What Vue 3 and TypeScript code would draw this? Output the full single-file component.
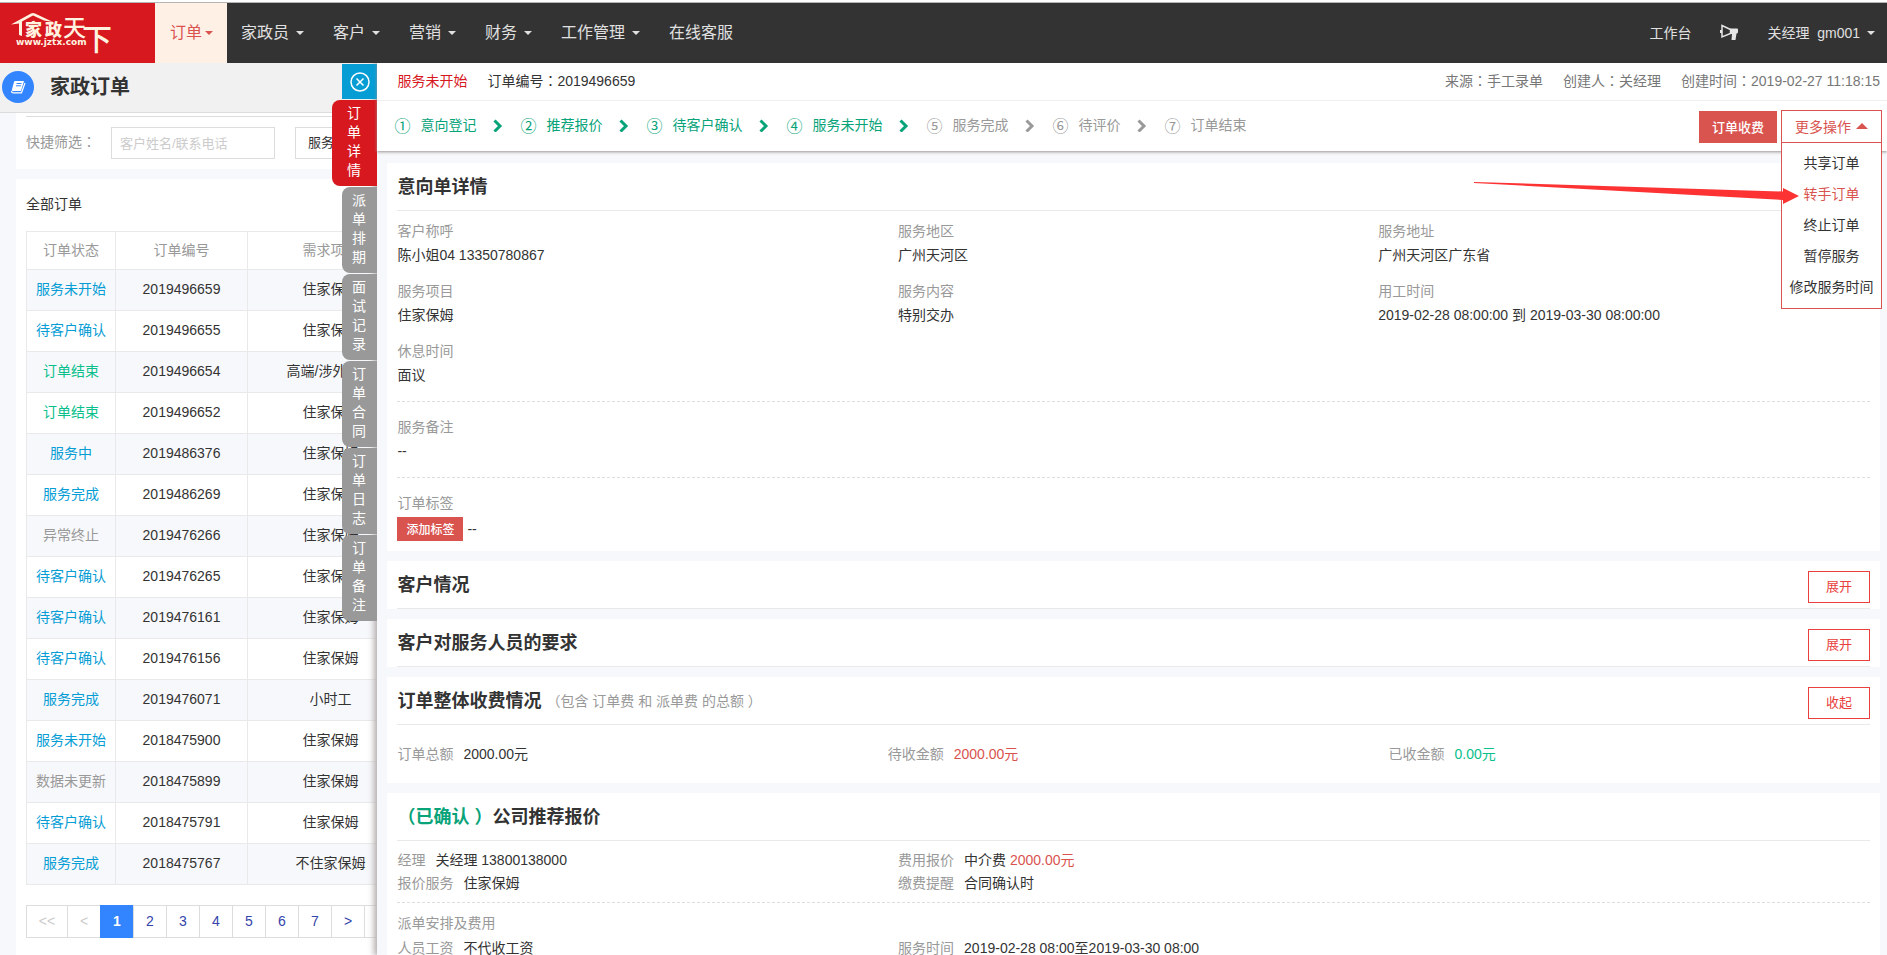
<script setup lang="ts">
import { ref } from 'vue'

interface NavItem { label: string; caret: boolean }
interface Order { status: string; tone: string; id: string; need: string }
interface Step { no: string; label: string; done: boolean }

const nav: NavItem[] = [
  { label: '家政员', caret: true },
  { label: '客户', caret: true },
  { label: '营销', caret: true },
  { label: '财务', caret: true },
  { label: '工作管理', caret: true },
  { label: '在线客服', caret: false },
]

const orders: Order[] = [
  { status: '服务未开始', tone: 'blue', id: '2019496659', need: '住家保姆' },
  { status: '待客户确认', tone: 'blue', id: '2019496655', need: '住家保姆' },
  { status: '订单结束', tone: 'green', id: '2019496654', need: '高端/涉外保姆' },
  { status: '订单结束', tone: 'green', id: '2019496652', need: '住家保姆' },
  { status: '服务中', tone: 'blue', id: '2019486376', need: '住家保姆' },
  { status: '服务完成', tone: 'blue', id: '2019486269', need: '住家保姆' },
  { status: '异常终止', tone: 'gray', id: '2019476266', need: '住家保姆' },
  { status: '待客户确认', tone: 'blue', id: '2019476265', need: '住家保姆' },
  { status: '待客户确认', tone: 'blue', id: '2019476161', need: '住家保姆' },
  { status: '待客户确认', tone: 'blue', id: '2019476156', need: '住家保姆' },
  { status: '服务完成', tone: 'blue', id: '2019476071', need: '小时工' },
  { status: '服务未开始', tone: 'blue', id: '2018475900', need: '住家保姆' },
  { status: '数据未更新', tone: 'gray', id: '2018475899', need: '住家保姆' },
  { status: '待客户确认', tone: 'blue', id: '2018475791', need: '住家保姆' },
  { status: '服务完成', tone: 'blue', id: '2018475767', need: '不住家保姆' },
]

const pages = ['1', '2', '3', '4', '5', '6', '7']
const tabs = ['订单详情', '派单排期', '面试记录', '订单合同', '订单日志', '订单备注']
const activeTab = ref(0)

const steps: Step[] = [
  { no: '①', label: '意向登记', done: true },
  { no: '②', label: '推荐报价', done: true },
  { no: '③', label: '待客户确认', done: true },
  { no: '④', label: '服务未开始', done: true },
  { no: '⑤', label: '服务完成', done: false },
  { no: '⑥', label: '待评价', done: false },
  { no: '⑦', label: '订单结束', done: false },
]

const details = [
  ['客户称呼', '陈小姐04 13350780867'],
  ['服务地区', '广州天河区'],
  ['服务地址', '广州天河区广东省'],
  ['服务项目', '住家保姆'],
  ['服务内容', '特别交办'],
  ['用工时间', '2019-02-28 08:00:00 到 2019-03-30 08:00:00'],
  ['休息时间', '面议'],
]

const actions = ['共享订单', '转手订单', '终止订单', '暂停服务', '修改服务时间']
const keyword = ref('')
</script>

<template>
  <div class="app">
    <header class="topbar">
      <a class="logo" href="#" aria-label="家政天下">
        <svg width="155" height="60" viewBox="0 0 155 60">
          <path d="M11 21.500 L31 10.500 Q33 9.500 35 10.500 L53 19 L44 17.500 L33 12.500 L22 18.500 L22 33 L19 32 L19 20.500 Z" fill="#fff3e0" />
          <text class="logo-name" x="25 45" y="33">家政</text>
          <text class="logo-big" x="63" y="33">天</text>
          <text class="logo-tall" x="82" y="47">下</text>
          <text class="logo-url" x="16" y="42">www.jztx.com</text>
        </svg>
      </a>
      <nav class="nav">
        <a class="nav-item current" href="#">订单<i class="caret"></i></a>
        <a v-for="n in nav" :key="n.label" class="nav-item" href="#">{{ n.label }}<i v-if="n.caret" class="caret"></i></a>
      </nav>
      <div class="user">
        <a href="#">工作台</a>
        <a href="#" aria-label="公告">
          <svg width="20" height="18" viewBox="0 0 20 18">
            <path d="M3 1.500 L11.500 5.500 V9.500 L3 13 Z" fill="none" stroke="#e6e6e6" stroke-width="1.500" />
            <path d="M1 6 H3 V9 H1 Z M11 4.500 H18 Q19 4.500 19 5.500 V8 Q19 9.500 17.500 9.500 L16.500 16 H12.500 L13 10 H11 Z" fill="#e6e6e6" />
          </svg>
        </a>
        <a class="account" href="#">关经理&nbsp; gm001<i class="caret"></i></a>
      </div>
    </header>

    <div class="body">
      <main class="list">
        <div class="list-head">
          <span class="book">
            <svg width="16" height="14" viewBox="0 0 16 14">
              <path d="M5 1 H14 L11 11 H2.500 Q1.500 11 1.800 10 L4 2 Q4.300 1 5 1 Z" fill="#fff" />
              <path d="M6.500 3.500 H11.500 M6 5.800 H11" stroke="#3385ff" />
              <path d="M1.500 11 Q1.500 12.800 3 12.800 H11.500 L15 3" fill="none" stroke="#fff" stroke-width="1.200" />
            </svg>
          </span>
          <h1>家政订单</h1>
        </div>
        <section class="card filter">
          <label for="keyword">快捷筛选<span class="mid">：</span></label>
          <input id="keyword" v-model="keyword" type="text" placeholder="客户姓名/联系电话" />
          <select aria-label="服务项目"><option>服务项目</option></select>
        </section>
        <section class="card orders">
          <h2>全部订单</h2>
          <table>
            <colgroup><col class="c1" /><col class="c2" /><col class="c3" /></colgroup>
            <thead>
              <tr><th>订单状态</th><th>订单编号</th><th>需求项目</th></tr>
            </thead>
            <tbody>
              <tr v-for="o in orders" :key="o.id">
                <td :class="o.tone">{{ o.status }}</td><td>{{ o.id }}</td><td>{{ o.need }}</td>
              </tr>
            </tbody>
          </table>
          <div class="pager">
            <button class="off wide" type="button">&lt;&lt;</button>
            <button class="off" type="button">&lt;</button>
            <button v-for="p in pages" :key="p" type="button" :class="{ on: p === '1' }">{{ p }}</button>
            <button type="button">&gt;</button>
            <button class="wide" type="button">&gt;&gt;</button>
          </div>
        </section>
      </main>

      <aside class="drawer">
        <div class="tabs">
          <button class="close" type="button" aria-label="关闭">
            <svg width="20" height="20" viewBox="0 0 20 20" fill="none" stroke="#fff" stroke-width="1.500">
              <circle cx="10" cy="10" r="9" /><path d="M6.500 6.500 L13.500 13.500 M13.500 6.500 L6.500 13.500" />
            </svg>
          </button>
          <button v-for="(t, i) in tabs" :key="t" class="tab" type="button" :class="{ active: i === activeTab }" @click="activeTab = i">{{ t }}</button>
        </div>

        <div class="drawer-head">
          <div class="meta">
            <span class="state">服务未开始</span>
            <span class="code">订单编号<span class="mid">：</span>2019496659</span>
            <span class="from">来源<span class="mid">：</span>手工录单</span>
            <span>创建人<span class="mid">：</span>关经理</span>
            <span>创建时间<span class="mid">：</span>2019-02-27 11:18:15</span>
          </div>
          <div class="flow">
            <ol class="steps">
              <li v-for="(s, i) in steps" :key="s.no" :class="{ done: s.done }">
                <span class="no">{{ s.no }}</span><span>{{ s.label }}</span>
                <svg v-if="i < steps.length - 1" width="10" height="14" viewBox="0 0 10 14">
                  <path d="M1.500 2.500 L7 8 L1.500 13.500" fill="none" stroke="currentColor" stroke-width="3" />
                </svg>
              </li>
            </ol>
            <button class="charge" type="button">订单收费</button>
            <div class="more">
              <button class="more-btn" type="button">更多操作<i class="up"></i></button>
              <ul class="menu">
                <li v-for="(a, i) in actions" :key="a"><a href="#" :class="{ hot: i === 1 }">{{ a }}</a></li>
              </ul>
            </div>
          </div>
          <svg class="pointer" width="327" height="24" viewBox="0 0 327 24">
            <path d="M1 1 L310 10.500 V7 L326 15 L310 23 V19 L1 2 Z" fill="#fd3333" />
          </svg>
        </div>

        <div class="content">
          <section class="panel">
            <div class="title"><h3>意向单详情</h3></div>
            <dl class="grid">
              <div v-for="d in details" :key="d[0]"><dt>{{ d[0] }}</dt><dd>{{ d[1] }}</dd></div>
            </dl>
            <dl class="block"><dt>服务备注</dt><dd>--</dd></dl>
            <dl class="block last">
              <dt>订单标签</dt>
              <dd class="tagline"><button class="tag" type="button">添加标签</button><span>--</span></dd>
            </dl>
          </section>

          <section class="panel">
            <div class="title"><h3>客户情况</h3><button class="toggle" type="button">展开</button></div>
          </section>
          <section class="panel">
            <div class="title"><h3>客户对服务人员的要求</h3><button class="toggle" type="button">展开</button></div>
          </section>
          <section class="panel">
            <div class="title">
              <h3>订单整体收费情况</h3><small>（包含 订单费 和 派单费 的总额 ）</small>
              <button class="toggle" type="button">收起</button>
            </div>
            <dl class="totals">
              <div><dt>订单总额</dt><dd>2000.00元</dd></div>
              <div><dt>待收金额</dt><dd class="red">2000.00元</dd></div>
              <div><dt>已收金额</dt><dd class="green">0.00元</dd></div>
            </dl>
          </section>
          <section class="panel">
            <div class="title"><h3><span class="ok">（已确认 ）</span>公司推荐报价</h3></div>
            <dl class="pairs quote">
              <div><dt>经理</dt><dd>关经理 13800138000</dd></div>
              <div><dt>费用报价</dt><dd>中介费 <span class="red">2000.00元</span></dd></div>
              <div><dt>报价服务</dt><dd>住家保姆</dd></div>
              <div><dt>缴费提醒</dt><dd>合同确认时</dd></div>
            </dl>
            <div class="dispatch">
              <h4>派单安排及费用</h4>
              <dl class="pairs">
                <div><dt>人员工资</dt><dd>不代收工资</dd></div>
                <div><dt>服务时间</dt><dd>2019-02-28 08:00至2019-03-30 08:00</dd></div>
              </dl>
            </div>
          </section>
        </div>
      </aside>
    </div>
  </div>
</template>

<style>
body { margin: 0; }
</style>

<style scoped>
.app {
  height: 100vh;
  display: flex;
  flex-direction: column;
  overflow: hidden;
  box-sizing: border-box;
  padding-top: 2px;
  background: #fff;
  color: #333;
  font: 14px/24px "Liberation Sans", "Noto Sans CJK SC", sans-serif;
}
.app *, .app *::before { box-sizing: border-box; }
h1, h2, h3, h4, dl, dd, ul, ol { margin: 0; padding: 0; }
ul, ol { list-style: none; }
a { color: inherit; text-decoration: none; }
button { font-family: inherit; cursor: pointer; padding: 0; border: 0; border-radius: 0; }
.mid { font-family: "Noto Sans CJK TC", sans-serif; line-height: 1; }
.blue { color: #069dd5; }
.green { color: #09c08c; }
.gray { color: #999; }
.red { color: #d9534f; }

.topbar {
  flex: none;
  display: flex;
  height: 61px;
  border-top: 1px solid #b5b5b5;
  background: #333;
  color: #e0e0e0;
}
.logo { width: 155px; background: #d7181e; }
.logo svg { display: block; }
.logo text { fill: #fff3e0; font-family: "Noto Sans CJK SC", sans-serif; }
.logo .logo-name { font-size: 17px; font-weight: 900; }
.logo .logo-big { font-size: 23px; font-weight: 500; }
.logo .logo-tall { font-size: 30px; font-weight: 500; }
.logo .logo-url { font: bold 9px "DejaVu Sans", sans-serif; }
.nav { display: flex; font-size: 16px; line-height: 60px; }
.nav-item { display: flex; align-items: center; padding: 0 15px 0 14px; }
.nav-item .caret { margin-left: 7px; }
.nav-item.current { background: #fff0e6; color: #d9534f; padding-left: 15px; padding-right: 14px; }
.nav-item.current .caret { margin-left: 3px; }
.caret { border: 4px solid transparent; border-top-color: currentColor; border-bottom: 0; }
.user { margin-left: auto; display: flex; align-items: center; gap: 28px; padding-right: 12px; }
.user svg { display: block; }
.account { display: flex; align-items: center; }
.account .caret { margin-left: 7px; }

.body { flex: 1; min-height: 0; position: relative; background: #f7f8fb; overflow: hidden; }
.list-head {
  height: 50px;
  display: flex;
  align-items: center;
  gap: 16px;
  padding: 0 0 2px 2px;
  background: #f1f1f1;
  border-bottom: 1px solid #ddd;
}
.list-head h1 { font-size: 20px; }
.book { width: 32px; height: 32px; border-radius: 50%; background: #3385ff; display: grid; place-items: center; }
.card { margin-left: 16px; padding: 0 10px; background: #fff; }
.filter { display: flex; align-items: center; height: 56px; padding-top: 4px; margin-bottom: 10px; position: relative; }
.filter::before { content: ""; position: absolute; top: 3px; left: 10px; right: 10px; height: 1px; background: #ddd; }
.filter label { width: 85px; padding-bottom: 2px; color: #999; }
.filter input, .filter select {
  height: 32px;
  border: 1px solid #ddd;
  border-radius: 0;
  background: #fff;
  color: #333;
  font: 13px/30px "Liberation Sans", "Noto Sans CJK SC", sans-serif;
  padding: 0 8px;
}
.filter input { width: 164px; margin-right: 20px; }
.filter input::placeholder { color: #ccc; }
.filter select { width: 120px; appearance: none; padding-left: 12px; }
.orders { padding-top: 13px; height: 900px; }
.orders h2 { font-size: 14px; font-weight: normal; margin-bottom: 15px; }
table { table-layout: fixed; width: 387px; border-collapse: collapse; text-align: center; }
.c1 { width: 89px; }
.c2 { width: 132px; }
.c3 { width: 166px; }
th, td { border: 1px solid #e9e9e9; padding: 0 0 2px; height: 41px; line-height: 20px; font-weight: normal; }
th { height: 38px; color: #999; }
tbody tr:nth-child(odd) { background: #f7f8fb; }
.pager { display: flex; margin-top: 20px; }
.pager button {
  width: 34px;
  height: 33px;
  margin-right: -1px;
  padding-bottom: 1px;
  background: #fff;
  border: 1px solid #ddd;
  color: #3344aa;
  font-size: 14px;
}
.pager .wide { width: 42px; }
.pager .off { color: #ccc; }
.pager .on { background: #3385ff; border-color: #3385ff; color: #fff; font-weight: bold; }

.drawer {
  position: absolute;
  top: 0;
  right: 0;
  bottom: 0;
  width: 80%;
  display: flex;
  flex-direction: column;
  background: #f7f8fb;
  box-shadow: -2px 0 6px 1px #b5aeae;
}
.tabs { position: absolute; right: 100%; top: 1px; display: flex; flex-direction: column; align-items: flex-end; gap: 1px; }
.close { width: 35px; height: 35px; background: #069dd5; display: grid; place-items: center; }
.tab {
  width: 35px;
  padding: 4px 11px 6px 9px;
  border-radius: 8px 0 0 8px;
  background: #999;
  color: #fff;
  font-size: 14px;
  line-height: 19px;
  word-break: break-all;
}
.tab.active { width: 45px; padding: 4px 16px 6px 14px; background: #d7181e; }
.drawer-head { position: relative; z-index: 2; background: #fff; box-shadow: 0 1px 3px #9a9090; }
.meta { display: flex; gap: 20px; height: 38px; align-items: center; padding: 0 7px 2px 20px; border-bottom: 1px solid #f0f0f0; color: #777; }
.state { color: #d7181e; }
.code { color: #333; }
.from { margin-left: auto; }
.flow { display: flex; height: 50px; padding: 9px 5px 0 17px; }
.steps { display: flex; height: 30px; align-items: center; color: #999; margin-right: auto; }
.steps li { display: flex; align-items: center; }
.steps .done { color: #09a37a; }
.steps .no { width: 26px; font-size: 16px; font-family: "Noto Sans CJK SC", sans-serif; }
.steps svg { margin: 0 17px; }
.charge { width: 78px; height: 32px; margin: 1px 4px 0 0; padding-bottom: 2px; background: #d9534f; color: #fff; font-size: 13px; font-weight: 500; }
.more { position: relative; width: 101px; }
.more-btn {
  display: flex;
  align-items: center;
  justify-content: center;
  gap: 5px;
  width: 100%;
  height: 33px;
  padding-bottom: 2px;
  border: 1px solid #d9534f;
  border-bottom: 0;
  background: #fff;
  color: #d9534f;
  font-size: 14px;
}
.up { border: 6px solid transparent; border-bottom-color: currentColor; border-top: 0; }
.menu { position: absolute; top: 32px; left: 0; right: 0; padding: 5px 0; border: 1px solid #d9534f; background: #fff; text-align: center; line-height: 31px; white-space: nowrap; }
.menu a { display: block; }
.hot { color: #d9534f; }
.pointer { position: absolute; right: 87px; top: 118px; }

.content { flex: 1; min-height: 0; overflow: hidden; padding: 12px 7px 0 10px; }
.panel { background: #fff; padding: 0 10px; margin-bottom: 10px; }
.title { display: flex; height: 48px; align-items: center; border-bottom: 1px solid #e9e9e9; }
.title h3 { font-size: 18px; line-height: 46px; }
.title small { font-size: 14px; color: #999; margin-left: 5px; }
.toggle { width: 62px; height: 32px; margin: 4px 0 0 auto; padding-bottom: 2px; border: 1px solid #e8403c; background: #fff; color: #e8403c; font-size: 13px; }
dt, h4 { color: #999; font-size: 14px; font-weight: normal; }
.grid { display: grid; grid-template-columns: 340fr 326fr 334fr; row-gap: 12px; padding: 8px 0 14px; }
.block { border-top: 1px dashed #ddd; padding: 13px 0 14px; }
.block.last { padding-bottom: 10px; }
.tagline { display: flex; align-items: center; gap: 4px; padding-top: 2px; }
.tag { width: 66px; height: 24px; padding-bottom: 2px; background: #d9534f; color: #fff; font-size: 12px; font-weight: 500; }
.totals { display: grid; grid-template-columns: 333fr 340fr 327fr; line-height: 58px; }
.totals div, .pairs div { display: flex; gap: 10px; }
.ok { color: #09a37a; }
.pairs { display: grid; grid-template-columns: 34fr 66fr; }
.quote { padding: 8px 0 7px; line-height: 23px; }
.dispatch { border-top: 1px dashed #ddd; padding: 8px 0; line-height: 25px; }
</style>
